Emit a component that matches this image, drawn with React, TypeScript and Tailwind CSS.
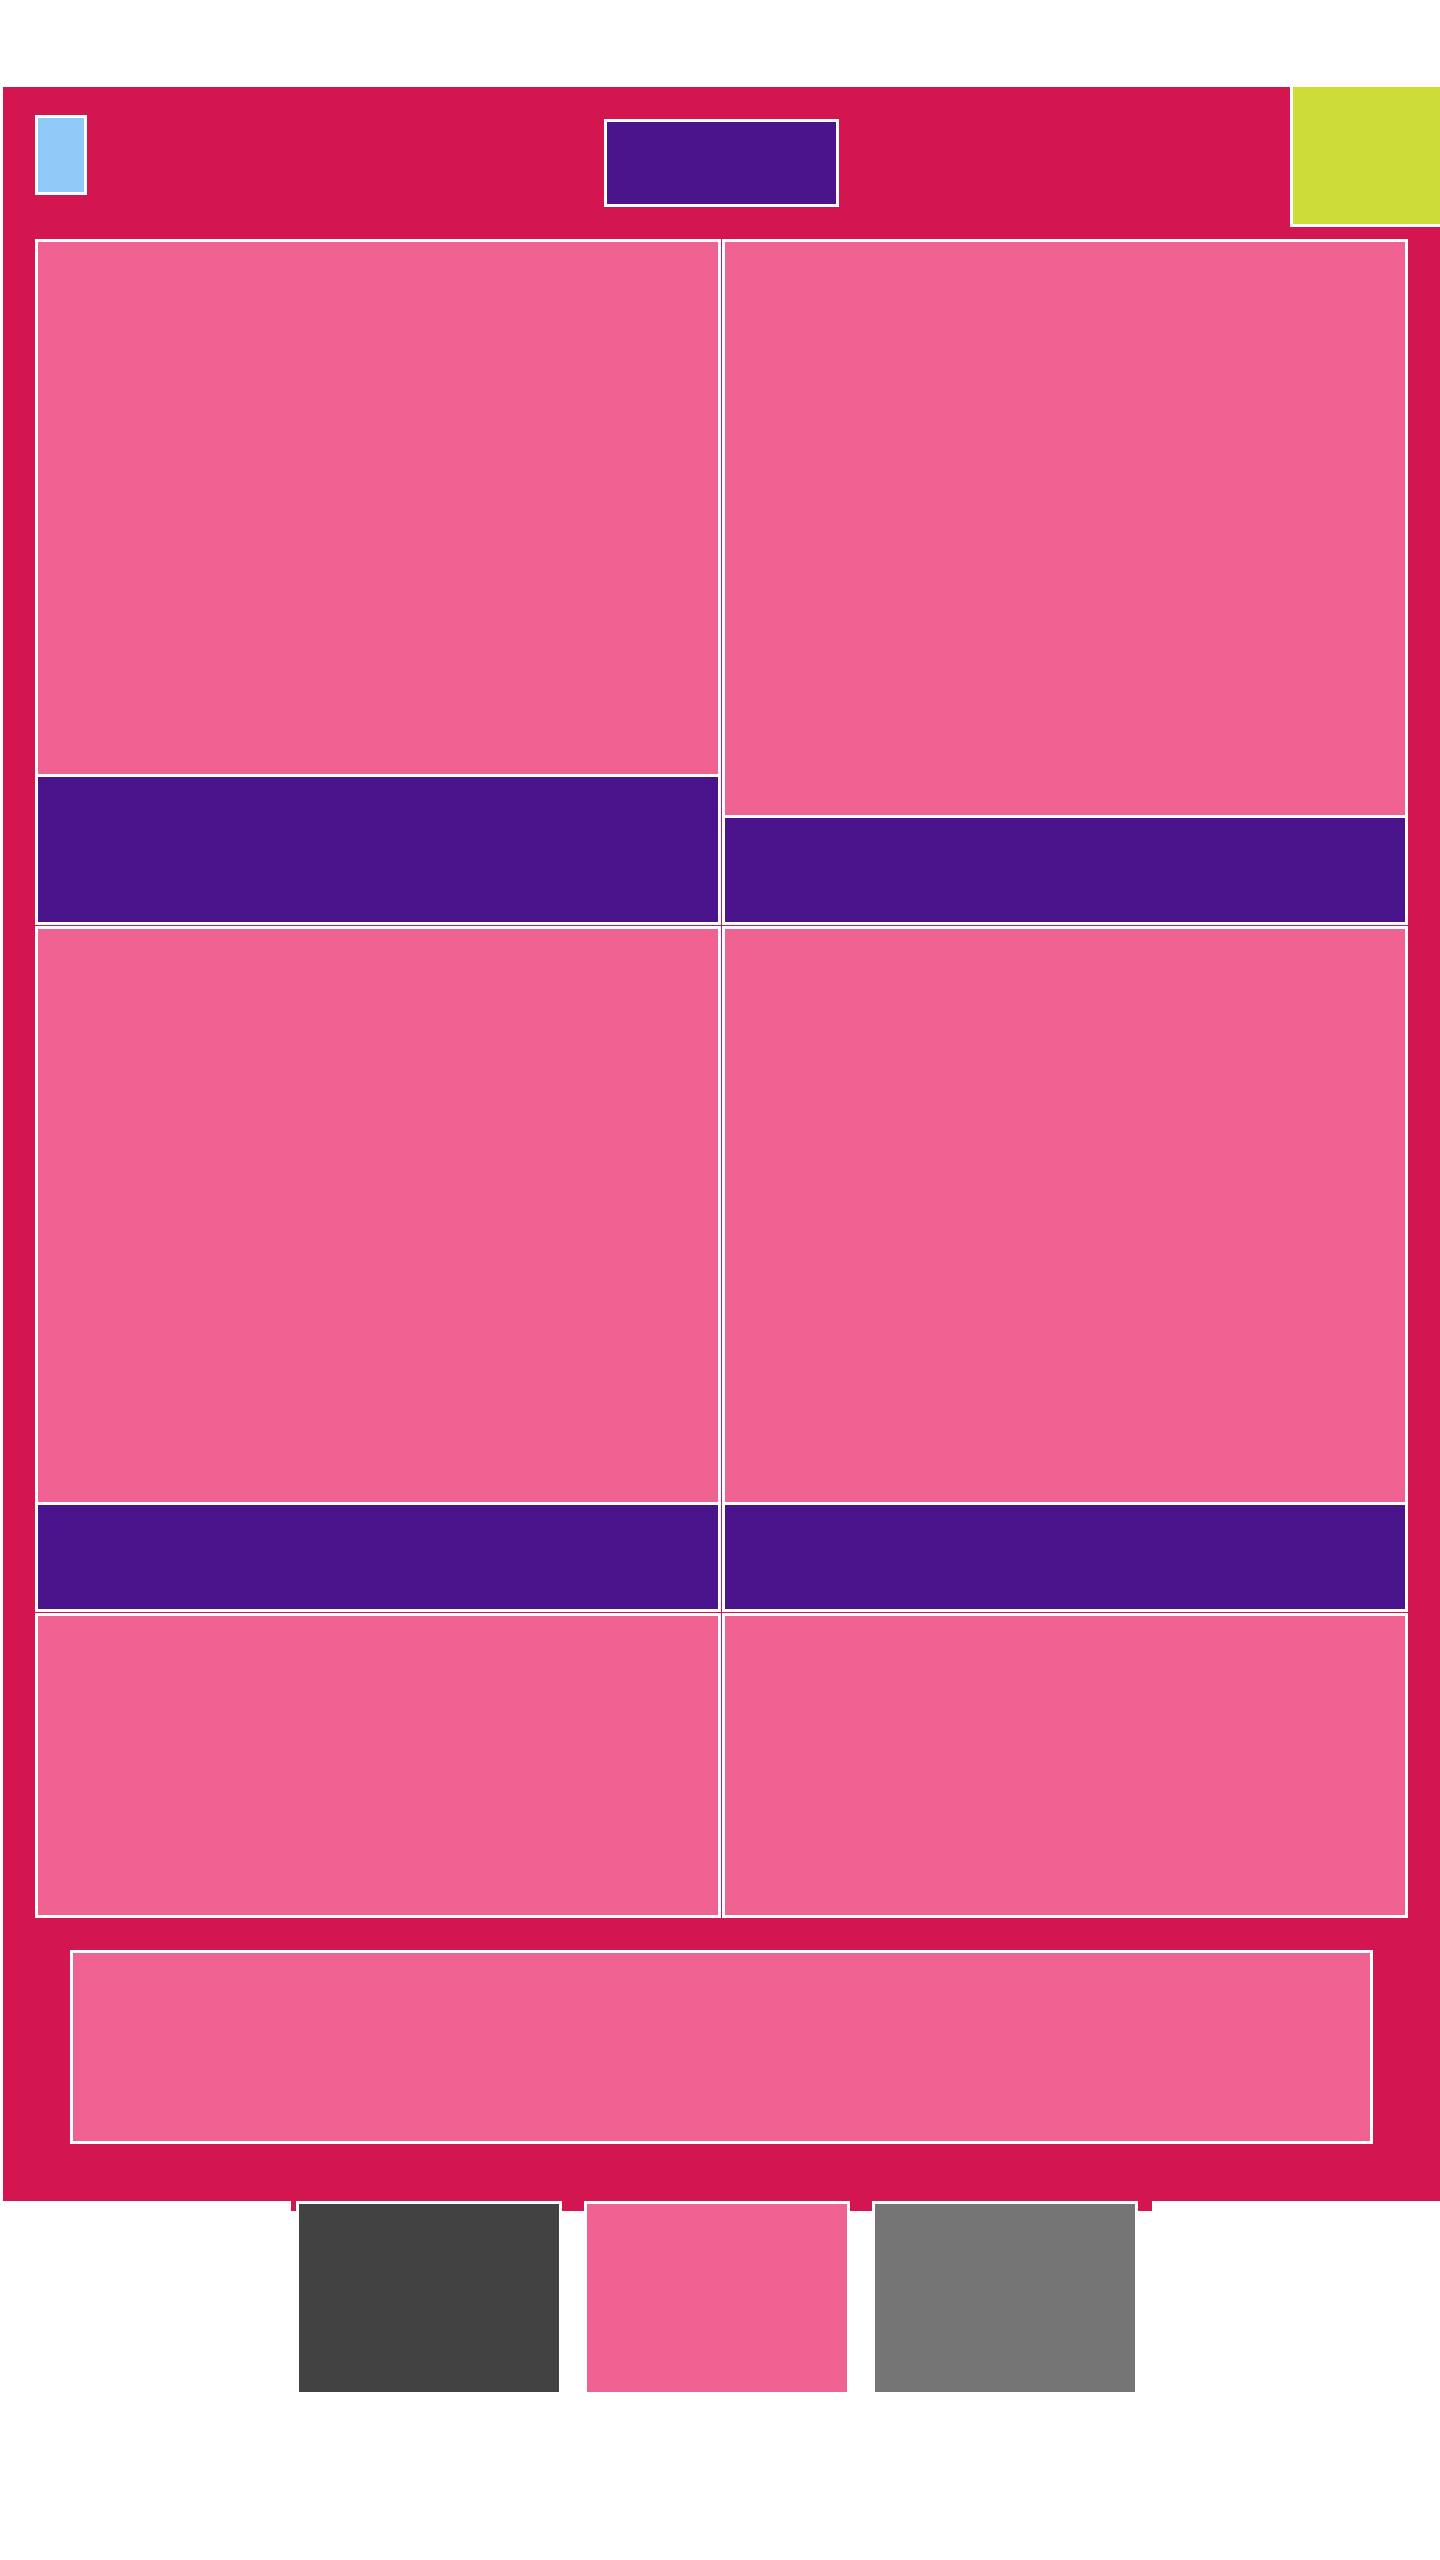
import React from "react";

const cards = [
  { top: "h-[532px]", bottom: "h-[148px]" },
  { top: "h-[573px]", bottom: "h-[107px]" },
  { top: "h-[573px]", bottom: "h-[107px]" },
  { top: "h-[573px]", bottom: "h-[107px]" },
];

function Card({ top, bottom }: { top: string; bottom: string }) {
  return (
    <div className="flex flex-col border-[3px] border-white">
      <div className={`${top} bg-[#f06292]`} />
      <div className={`${bottom} border-t-[3px] border-white bg-[#4a148c]`} />
    </div>
  );
}

export default function App() {
  return (
    <div className="min-h-[2560px] bg-white pt-[87px] font-['Liberation_Sans',sans-serif]">
      <div className="ml-[3px] w-[1437px] bg-[#d31650] pb-[57px]">
        <header className="grid h-[152px] grid-cols-[1fr_auto_1fr] items-start">
          <div className="ml-[32px] mt-[28px] h-[80px] w-[52px] border-[3px] border-white bg-[#90caf9]" />
          <button className="mt-[32px] h-[88px] w-[235px] border-[3px] border-white bg-[#4a148c]" />
          <div className="h-[140px] w-[150px] justify-self-end border-b-[3px] border-l-[3px] border-white bg-[#cddc39]" />
        </header>

        <div className="px-[32px]">
          <div className="grid grid-cols-2 gap-px">
            {cards.map((c, i) => (
              <Card key={i} top={c.top} bottom={c.bottom} />
            ))}
            <div className="h-[305px] border-[3px] border-white bg-[#f06292]" />
            <div className="h-[305px] border-[3px] border-white bg-[#f06292]" />
          </div>

          <div className="mx-[35px] mt-[32px] h-[194px] border-[3px] border-white bg-[#f06292]" />
        </div>
      </div>

      <div className="ml-[291px] flex h-[10px] w-[861px] items-start gap-[22px] bg-[#d31650] pl-[5px]">
        <div className="h-[194px] w-[266px] shrink-0 border-[3px] border-white bg-[#424242]" />
        <div className="h-[194px] w-[266px] shrink-0 border-[3px] border-white bg-[#f06292]" />
        <div className="h-[194px] w-[266px] shrink-0 border-[3px] border-white bg-[#757575]" />
      </div>
    </div>
  );
}
